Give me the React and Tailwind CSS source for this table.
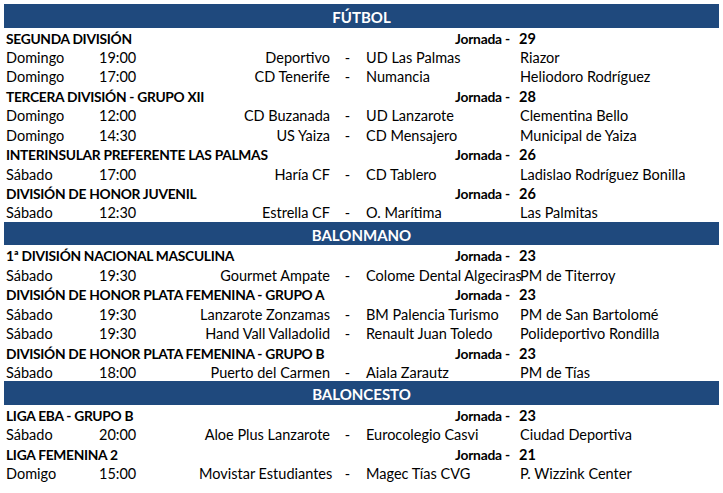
import React from "react";

const sections = [
  {
    name: "FÚTBOL",
    leagues: [
      {
        title: "SEGUNDA DIVISIÓN",
        jornada: "29",
        games: [
          ["Domingo", "19:00", "Deportivo", "UD Las Palmas", "Riazor"],
          ["Domingo", "17:00", "CD Tenerife", "Numancia", "Heliodoro Rodríguez"],
        ],
      },
      {
        title: "TERCERA DIVISIÓN - GRUPO XII",
        jornada: "28",
        games: [
          ["Domingo", "12:00", "CD Buzanada", "UD Lanzarote", "Clementina Bello"],
          ["Domingo", "14:30", "US Yaiza", "CD Mensajero", "Municipal de Yaiza"],
        ],
      },
      {
        title: "INTERINSULAR PREFERENTE LAS PALMAS",
        jornada: "26",
        games: [["Sábado", "17:00", "Haría CF", "CD Tablero", "Ladislao Rodríguez Bonilla"]],
      },
      {
        title: "DIVISIÓN DE HONOR JUVENIL",
        jornada: "26",
        games: [["Sábado", "12:30", "Estrella CF", "O. Marítima", "Las Palmitas"]],
      },
    ],
  },
  {
    name: "BALONMANO",
    leagues: [
      {
        title: "1ª DIVISIÓN NACIONAL MASCULINA",
        jornada: "23",
        games: [["Sábado", "19:30", "Gourmet Ampate", "Colome Dental Algeciras", "PM de Titerroy"]],
      },
      {
        title: "DIVISIÓN DE HONOR PLATA FEMENINA - GRUPO A",
        jornada: "23",
        games: [
          ["Sábado", "19:30", "Lanzarote Zonzamas", "BM Palencia Turismo", "PM de San Bartolomé"],
          ["Sábado", "19:30", "Hand Vall Valladolid", "Renault Juan Toledo", "Polideportivo Rondilla"],
        ],
      },
      {
        title: "DIVISIÓN DE HONOR PLATA FEMENINA - GRUPO B",
        jornada: "23",
        games: [["Sábado", "18:00", "Puerto del Carmen", "Aiala Zarautz", "PM de Tías"]],
      },
    ],
  },
  {
    name: "BALONCESTO",
    leagues: [
      {
        title: "LIGA EBA - GRUPO B",
        jornada: "23",
        games: [["Sábado", "20:00", "Aloe Plus Lanzarote", "Eurocolegio Casvi", "Ciudad Deportiva"]],
      },
      {
        title: "LIGA FEMENINA 2",
        jornada: "21",
        games: [["Domigo", "15:00", "Movistar Estudiantes", "Magec Tías CVG", "P. Wizzink Center"]],
      },
    ],
  },
];

const cols = "grid grid-cols-[93px_100px_132px_33px_154px_1fr] h-[19.45px] whitespace-nowrap";

export default function App() {
  return (
    <div className="bg-white w-[723px] h-[493px] overflow-hidden text-black text-[14.5px] leading-none" style={{ fontFamily: "Lato, 'Open Sans', sans-serif" }}>
      <div className="pt-[4px] pl-[4px] w-[719px]">
        {sections.map((s) => (
          <div key={s.name}>
            <div className="h-[23.5px] pt-[3px] bg-[#1f497d] text-white font-bold text-[15px] flex items-center justify-center">
              {s.name}
            </div>
            <div className="pl-[2px]">
              {s.leagues.map((l) => (
                <div key={l.title}>
                  <div className={cols + " pt-[4px] items-baseline font-bold text-[13.8px]"}>
                    <div className="col-span-4 tracking-[-0.3px]">{l.title}</div>
                    <div className="text-right pr-[8px] tracking-[-0.2px]">Jornada -</div>
                    <div className="pl-[1px] text-[14.5px]">{l.jornada}</div>
                  </div>
                  {l.games.map((g, i) => (
                    <div key={i} className={cols + " pt-[3px] items-center"}>
                      <div>{g[0]}</div>
                      <div>{g[1]}</div>
                      <div className="text-right pr-[1px]">{g[2]}</div>
                      <div className="text-center">-</div>
                      <div className="pl-[2px]">{g[3]}</div>
                      <div className="pl-[2px]">{g[4]}</div>
                    </div>
                  ))}
                </div>
              ))}
            </div>
          </div>
        ))}
      </div>
    </div>
  );
}
